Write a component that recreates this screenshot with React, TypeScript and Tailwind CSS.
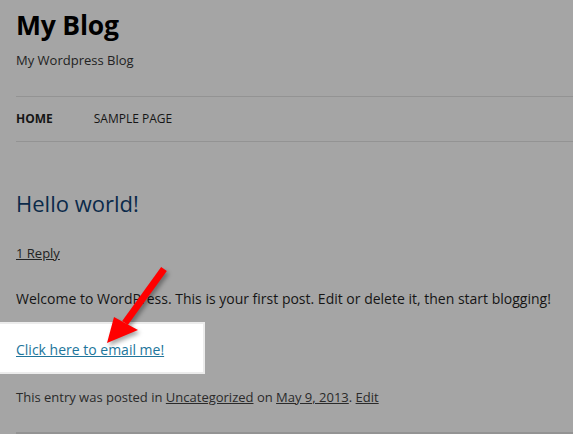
export default function App() {
  return (
    <div className="relative h-[434px] w-[573px] overflow-hidden bg-[#a5a5a5] font-['Open_Sans',sans-serif] text-[#151515]">
      <header className="pl-4 pt-[5px]">
        <h1 className="text-[26.5px] font-bold leading-[40px] tracking-[-0.2px] text-black">My Blog</h1>
        <p className="mt-[6px] text-[13px] leading-[18px] text-[#222]">My Wordpress Blog</p>
      </header>

      <nav className="ml-4 mt-[27px] flex h-[46px] items-center gap-[41px] border-y border-[#939393] text-[12px] uppercase text-[#151515]">
        <span className="font-bold">Home</span>
        <span>Sample Page</span>
      </nav>

      <article className="mt-[46px]">
        <h2 className="pl-4 text-[22px] leading-[30px] text-[#0b2a4a]">Hello world!</h2>
        <a className="ml-4 mt-[26px] inline-block text-[13px] leading-[18px] text-[#222] underline">1 Reply</a>
        <p className="mt-[25px] pl-4 text-[14px] leading-[20px]">
          Welcome to WordPress. This is your first post. Edit or delete it, then start blogging!
        </p>
        <div className="mt-[13px] flex h-[52px] w-[205px] items-center border-2 border-l-0 border-[#ececec] bg-white pl-4 pt-[3px]">
          <a className="text-[14px] leading-[20px] text-[#21759b] underline">Click here to email me!</a>
        </div>
        <p className="mt-[13px] pl-4 text-[13px] leading-[20px] text-[#2a2a2a]">
          This entry was posted in <a className="underline">Uncategorized</a> on{" "}
          <a className="underline">May 9, 2013</a>. <a className="underline">Edit</a>
        </p>
        <div className="ml-4 mt-[25px] border-t-2 border-[#939393]" />
      </article>

      <svg
        className="absolute left-[100px] top-[264px] drop-shadow-[2px_3px_2px_rgba(0,0,0,0.35)]"
        width="72"
        height="86"
        viewBox="0 0 72 86"
      >
        <line x1="64" y1="5" x2="25" y2="59" stroke="#ff0000" strokeWidth="7" />
        <polygon points="7,79 14,53 38,66" fill="#ff0000" />
      </svg>
    </div>
  );
}
